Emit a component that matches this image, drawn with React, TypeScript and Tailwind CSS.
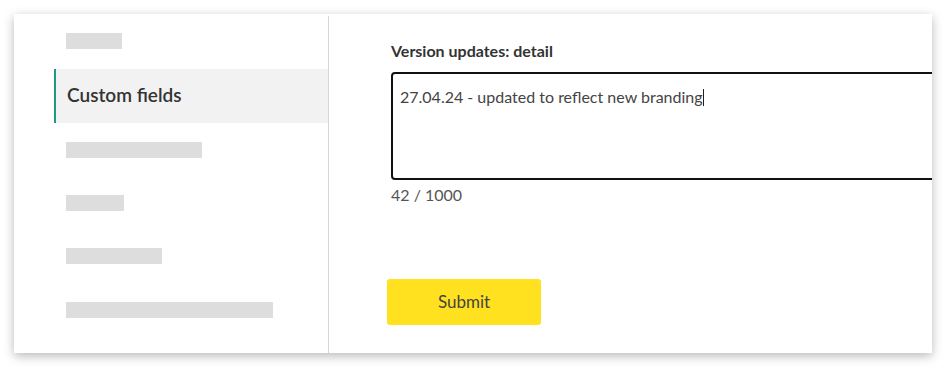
const bars = [136, 58, 96, 207];

function Bar({ width }: { width: number }) {
  return (
    <div className="h-[53.3px] flex items-center pl-[12px]">
      <div className="h-[16px] bg-[#dddddd]" style={{ width }} />
    </div>
  );
}

export default function App() {
  return (
    <div className="w-[946px] h-[367px] bg-white p-[14px] font-['Lato','Liberation_Sans',sans-serif]">
      <div className="w-[918px] h-[339px] bg-white flex overflow-hidden shadow-[0_3px_10px_rgba(0,0,0,0.28)]">
        <aside className="w-[315px] shrink-0 pl-[40px] border-r border-[#d6d6d6] mt-[2px]">
          <div className="h-[53px] flex items-center pl-[12px] pb-[3px]">
            <div className="h-[16px] w-[56px] bg-[#dddddd]" />
          </div>
          <div className="h-[54px] flex items-center bg-[#f2f2f2] border-l-2 border-[#1f9a80] pl-[11px] pb-[1px]">
            <span className="text-[19px] font-semibold text-[#333333]">Custom fields</span>
          </div>
          {bars.map((w, i) => (
            <Bar key={i} width={w} />
          ))}
        </aside>
        <main className="flex-1 pl-[62px] pt-[27px]">
          <div className="text-[16px] font-bold text-[#333333] leading-[20px]">Version updates: detail</div>
          <div className="mt-[11px] w-[620px] h-[108px] border-2 border-[#111111] rounded-[4px] pl-[7px] pt-[11px] text-[16px] leading-[24px] text-[#444444]">
            27.04.24 - updated to reflect new branding
            <span className="inline-block w-px h-[17px] bg-[#222222] align-[-3px]" />
          </div>
          <div className="mt-[3px] text-[16px] leading-[24px] text-[#555555]">42 / 1000</div>
          <button className="mt-[72px] -ml-[4px] w-[154px] h-[46px] bg-[#ffe11f] rounded-[3px] text-[17px] font-normal text-[#444444]">
            Submit
          </button>
        </main>
      </div>
    </div>
  );
}
